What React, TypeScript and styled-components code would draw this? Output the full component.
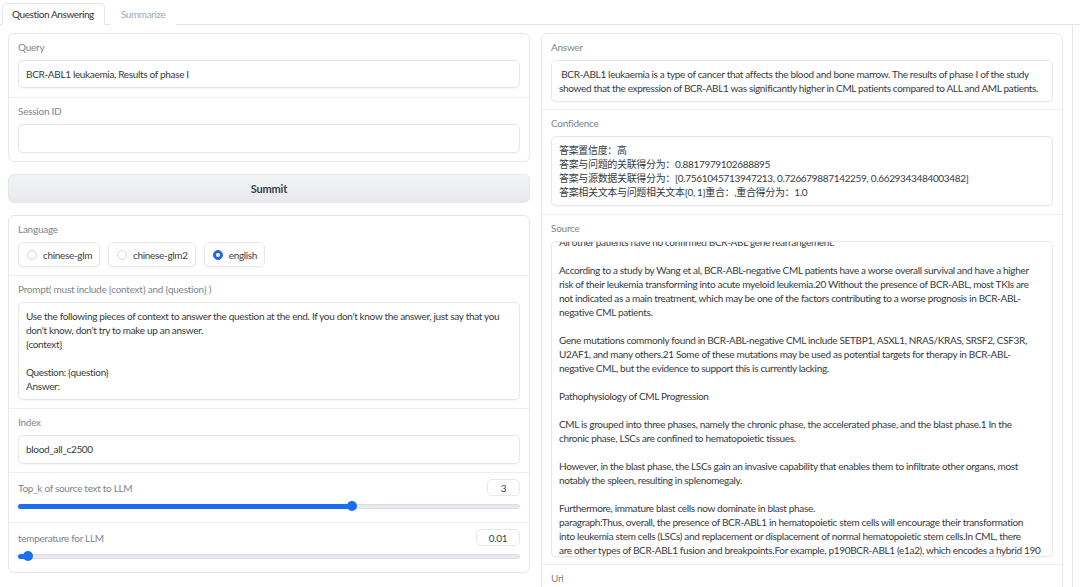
import styled, { createGlobalStyle } from 'styled-components';

const GlobalStyle = createGlobalStyle`
  html, body {
    margin: 0;
    padding: 0;
    background: #ffffff;
  }
  body {
    font-family: Lato, "Noto Sans CJK SC", sans-serif;
    font-size: 10px;
    letter-spacing: -0.33px;
    color: #3b3f46;
  }
  * {
    box-sizing: border-box;
  }
`

const TabNav = styled.div`
  display: flex;
  align-items: flex-end;
  height: 25px;
  padding-left: 2px;
  border-bottom: 1px solid #e5e7eb;
`
const Tab = styled.div<{ $active?: boolean }>`
  height: 22px;
  padding: 0 10px 0 9px;
  margin-bottom: -1px;
  display: flex;
  align-items: center;
  font-size: 10px;
  letter-spacing: -0.4px;
  color: ${p => (p.$active ? '#2f333a' : '#a3a8b0')};
  background: #ffffff;
  border: 1px solid ${p => (p.$active ? '#e5e7eb' : 'transparent')};
  border-bottom-color: ${p => (p.$active ? '#ffffff' : 'transparent')};
  border-radius: 5px 5px 0 0;
  margin-right: 6px;
`
const TabPanel = styled.div`
  width: 1073px;
  border-right: 1px solid #e5e7eb;
  padding: 8px 9px 0 8px;
  display: grid;
  grid-template-columns: 522px 522px;
  column-gap: 11px;
  align-items: start;
`
const Column = styled.div`
  display: flex;
  flex-direction: column;
  gap: 12px;
`
const Card = styled.div`
  background: #ffffff;
  border: 1px solid #e5e7eb;
  border-radius: 6px;
  overflow: hidden;
`
const Block = styled.div<{ $pb?: number }>`
  padding: 6px 9px ${p => p.$pb ?? 8}px 9px;
  & + & {
    border-top: 1px solid #eceef1;
  }
`
const Label = styled.div`
  font-size: 10px;
  line-height: 14px;
  letter-spacing: -0.25px;
  color: #80858d;
  margin-bottom: 6px;
`
const Field = styled.div<{ $h?: number }>`
  border: 1px solid #e5e7eb;
  border-radius: 5px;
  background: #ffffff;
  box-shadow: 0 1px 1px rgba(0, 0, 0, 0.03);
  padding: 6px 7px;
  min-height: ${p => p.$h ?? 28}px;
  font-size: 10px;
  line-height: 14px;
  color: #363a41;
  white-space: pre;
  overflow: hidden;
`
const SourceField = styled(Field)`
  height: 316px;
  padding: 0 7px;
`
const SourceText = styled.div`
  margin-top: -7px;
`
const SubmitButton = styled.button`
  height: 29px;
  width: 100%;
  border: 1px solid #e5e7eb;
  border-radius: 6px;
  background: linear-gradient(to bottom, #f3f4f6, #e7e9ec);
  font-family: inherit;
  font-size: 11px;
  font-weight: 700;
  letter-spacing: -0.2px;
  color: #3b3f46;
  cursor: pointer;
`
const RadioRow = styled.div`
  display: flex;
  gap: 8px;
`
const RadioItem = styled.label`
  height: 25px;
  display: flex;
  align-items: center;
  gap: 6px;
  padding: 0 7px 0 8px;
  border: 1px solid #e5e7eb;
  border-radius: 5px;
  background: #ffffff;
  box-shadow: 0 1px 1px rgba(0, 0, 0, 0.03);
  font-size: 10px;
  color: #3b3f46;
`
const RadioDot = styled.span<{ $checked?: boolean }>`
  width: 10px;
  height: 10px;
  border-radius: 50%;
  border: 1px solid ${p => (p.$checked ? '#2b63e6' : '#d4d7dc')};
  background: ${p => (p.$checked ? '#2b63e6' : '#ffffff')};
  display: flex;
  align-items: center;
  justify-content: center;
  &::after {
    content: '';
    width: 4px;
    height: 4px;
    border-radius: 50%;
    background: ${p => (p.$checked ? '#ffffff' : 'transparent')};
  }
`
const SliderHead = styled.div`
  display: flex;
  justify-content: space-between;
  align-items: center;
  height: 17px;
`
const SliderLabel = styled.span`
  font-size: 10px;
  letter-spacing: -0.3px;
  color: #80858d;
`
const NumberBox = styled.div<{ $w: number }>`
  width: ${p => p.$w}px;
  height: 17px;
  border: 1px solid #e5e7eb;
  border-radius: 5px;
  display: flex;
  align-items: center;
  justify-content: center;
  font-size: 10px;
  color: #3b3f46;
`
const SliderWrap = styled.div`
  position: relative;
  height: 14px;
  margin-top: 3px;
  display: flex;
  align-items: center;
`
const Track = styled.div`
  position: relative;
  width: 100%;
  height: 5px;
  border-radius: 3px;
  background: #e9eaed;
  border: 1px solid #d9dce0;
`
const Fill = styled.div`
  position: absolute;
  left: -1px;
  top: -1px;
  bottom: -1px;
  border-radius: 3px;
  background: #1a6ff0;
`
const Thumb = styled.div`
  position: absolute;
  top: 50%;
  width: 10px;
  height: 10px;
  margin: -5px 0 0 -5px;
  border-radius: 50%;
  background: #1a6ff0;
`

function Slider({ label, value, pct, boxWidth }: { label: string; value: string; pct: number; boxWidth: number }) {
  return (
    <Block $pb={9}>
      <SliderHead>
        <SliderLabel>{label}</SliderLabel>
        <NumberBox $w={boxWidth}>{value}</NumberBox>
      </SliderHead>
      <SliderWrap>
        <Track>
          <Fill style={{ width: `${pct}%` }} />
          <Thumb style={{ left: `${pct}%` }} />
        </Track>
      </SliderWrap>
    </Block>
  )
}

const prompt = [
  "Use the following pieces of context to answer the question at the end. If you don't know the answer, just say that you",
  "don't know, don't try to make up an answer.",
  "{context}",
  "",
  "Question: {question}",
  "Answer:",
].join('\n')

const answer = [
  " BCR-ABL1 leukaemia is a type of cancer that affects the blood and bone marrow. The results of phase I of the study",
  "showed that the expression of BCR-ABL1 was significantly higher in CML patients compared to ALL and AML patients.",
].join('\n')

const confidence = [
  '答案置信度：高',
  '答案与问题的关联得分为：0.8817979102688895',
  '答案与源数据关联得分为：[0.7561045713947213, 0.726679887142259, 0.6629343484003482]',
  '答案相关文本与问题相关文本[0, 1]重合：,重合得分为：1.0',
].join('\n')

const source = [
  'All other patients have no confirmed BCR-ABL gene rearrangement.',
  '',
  'According to a study by Wang et al, BCR-ABL-negative CML patients have a worse overall survival and have a higher',
  'risk of their leukemia transforming into acute myeloid leukemia.20 Without the presence of BCR-ABL, most TKIs are',
  'not indicated as a main treatment, which may be one of the factors contributing to a worse prognosis in BCR-ABL-',
  'negative CML patients.',
  '',
  'Gene mutations commonly found in BCR-ABL-negative CML include SETBP1, ASXL1, NRAS/KRAS, SRSF2, CSF3R,',
  'U2AF1, and many others.21 Some of these mutations may be used as potential targets for therapy in BCR-ABL-',
  'negative CML, but the evidence to support this is currently lacking.',
  '',
  'Pathophysiology of CML Progression',
  '',
  'CML is grouped into three phases, namely the chronic phase, the accelerated phase, and the blast phase.1 In the',
  'chronic phase, LSCs are confined to hematopoietic tissues.',
  '',
  'However, in the blast phase, the LSCs gain an invasive capability that enables them to infiltrate other organs, most',
  'notably the spleen, resulting in splenomegaly.',
  '',
  'Furthermore, immature blast cells now dominate in blast phase.',
  'paragraph:Thus, overall, the presence of BCR-ABL1 in hematopoietic stem cells will encourage their transformation',
  'into leukemia stem cells (LSCs) and replacement or displacement of normal hematopoietic stem cells.In CML, there',
  'are other types of BCR-ABL1 fusion and breakpoints.For example, p190BCR-ABL1 (e1a2), which encodes a hybrid 190',
].join('\n')

const languages = ['chinese-glm', 'chinese-glm2', 'english']

function App() {
  return (
    <>
      <GlobalStyle />
      <TabNav>
        <Tab $active>Question Answering</Tab>
        <Tab>Summarize</Tab>
      </TabNav>
      <TabPanel>
        <Column>
          <Card>
            <Block $pb={9}>
              <Label>Query</Label>
              <Field>BCR-ABL1 leukaemia, Results of phase I</Field>
            </Block>
            <Block>
              <Label>Session ID</Label>
              <Field $h={29}></Field>
            </Block>
          </Card>
          <SubmitButton>Summit</SubmitButton>
          <Card>
            <Block>
              <Label>Language</Label>
              <RadioRow>
                {languages.map(l => (
                  <RadioItem key={l}>
                    <RadioDot $checked={l === 'english'} />
                    {l}
                  </RadioItem>
                ))}
              </RadioRow>
            </Block>
            <Block>
              <Label>Prompt( must include {'{context}'} and {'{question}'} )</Label>
              <Field>{prompt}</Field>
            </Block>
            <Block>
              <Label>Index</Label>
              <Field $h={29}>blood_all_c2500</Field>
            </Block>
            <Slider label="Top_k of source text to LLM" value="3" pct={66.5} boxWidth={33} />
            <Slider label="temperature for LLM" value="0.01" pct={1.8} boxWidth={44} />
          </Card>
        </Column>
        <Column>
          <Card>
            <Block $pb={7}>
              <Label>Answer</Label>
              <Field>{answer}</Field>
            </Block>
            <Block $pb={8}>
              <Label>Confidence</Label>
              <Field>{confidence}</Field>
            </Block>
            <Block $pb={7}>
              <Label>Source</Label>
              <SourceField>
                <SourceText>{source}</SourceText>
              </SourceField>
            </Block>
            <Block>
              <Label>Url</Label>
              <Field $h={29}></Field>
            </Block>
          </Card>
        </Column>
      </TabPanel>
    </>
  )
}

export default App
